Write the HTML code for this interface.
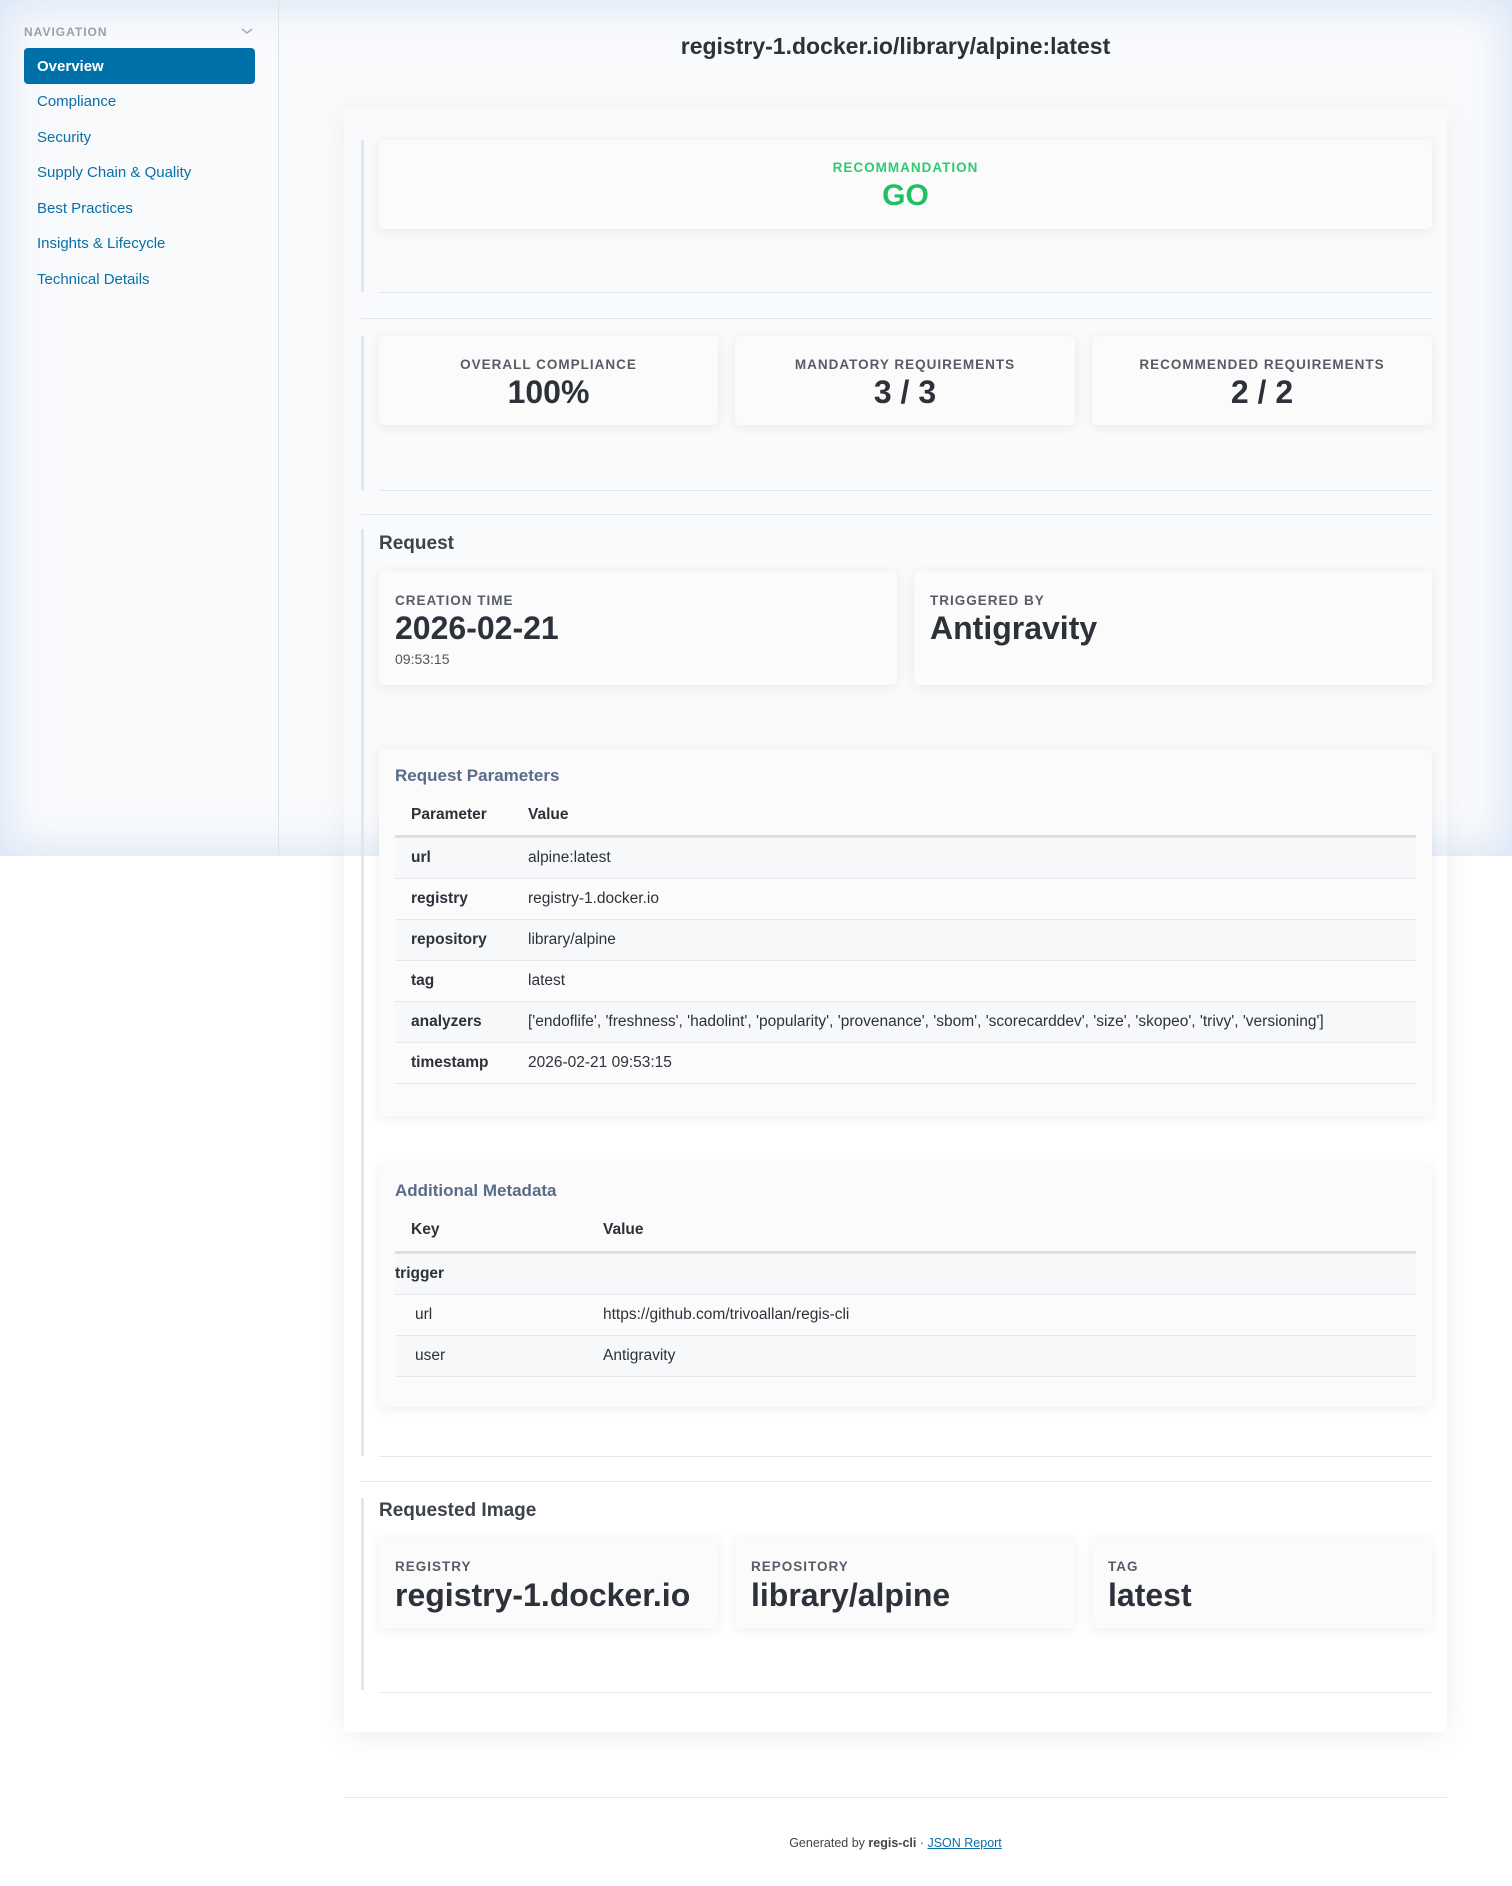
<!DOCTYPE html>
<html><head><meta charset="utf-8"><style>
*{box-sizing:border-box;margin:0;padding:0}
body{width:1512px;height:1886px;position:relative;background:#fff;font-family:"Liberation Sans",Arial,sans-serif;color:#2d3139;overflow:hidden}
.a{position:absolute;z-index:2}
.overlay{left:0;top:0;width:1512px;height:856px;background:rgba(238,241,245,0.35);box-shadow:inset 0 0 45px rgba(150,185,235,0.4);z-index:1 !important;pointer-events:none}
.side{left:0;top:0;width:279px;height:856px;border-right:1px solid #dfe3e8;z-index:6}
.navh{left:24px;top:25px;font-size:12px;font-weight:bold;letter-spacing:1px;color:#9aa0a8}
.chev{left:240px;top:26px}
.ov{left:24px;top:48px;width:231px;height:36px;background:#0070a8;border-radius:4px;color:#fff;font-weight:bold;font-size:15px;line-height:37px;padding-left:13px}
.ni{left:37px;font-size:15px;color:#0b6fa8}
.title{left:279px;width:1233px;top:33px;text-align:center;font-size:23px;font-weight:bold;color:#2d3139}
.main{left:344px;top:107px;width:1103px;height:1625px;background:#fff;border-radius:4px;box-shadow:0 4px 30px rgba(0,0,0,0.07);z-index:0 !important}
.bl{left:361px;width:3px;background:#e3e6ea}
.hr{height:1px;background:#e3e6ea}
.card{background:#fbfbfc;border-radius:5px;box-shadow:0 2px 12px rgba(0,0,0,0.07)}
.lab{font-size:13.5px;font-weight:bold;letter-spacing:1px;color:#575c66;text-transform:uppercase}
.big{font-size:32px;font-weight:bold;color:#2d3139}
.c{text-align:center}
.h2{font-size:19px;font-weight:bold;color:#3d424b}
.h3{font-size:17px;font-weight:bold;color:#5a6b8a}
.row{left:395px;width:1021px;height:41px;border-bottom:1px solid #e6e8eb;font-size:15.5px;line-height:40px}
.row b{position:absolute;left:16px}
.row span{position:absolute;left:133px}
.alt{background:#f7f8f9}
</style></head><body>
<div class="a overlay"></div>
<div class="a side">
 <div class="a navh">NAVIGATION</div>
 <svg class="a chev" width="14" height="10" viewBox="0 0 14 10"><path d="M2 3l5 4 5-4" fill="none" stroke="#a8adb4" stroke-width="1.5"/></svg>
 <div class="a ov">Overview</div>
 <div class="a ni" style="top:93px">Compliance</div>
 <div class="a ni" style="top:129px">Security</div>
 <div class="a ni" style="top:164px">Supply Chain &amp; Quality</div>
 <div class="a ni" style="top:200px">Best Practices</div>
 <div class="a ni" style="top:235px">Insights &amp; Lifecycle</div>
 <div class="a ni" style="top:271px">Technical Details</div>
</div>
<div class="a title">registry-1.docker.io/library/alpine:latest</div>
<div class="a main"></div>

<div class="a bl" style="top:140px;height:152px"></div>
<div class="a card" style="left:379px;top:140px;width:1053px;height:89px"></div>
<div class="a lab c" style="left:379px;width:1053px;top:160px;color:#2ecc71">RECOMMANDATION</div>
<div class="a c" style="left:379px;width:1053px;top:179px;font-size:30px;font-weight:bold;color:#1fbf63">GO</div>
<div class="a hr" style="left:379px;width:1053px;top:292px"></div>
<div class="a hr" style="left:361px;width:1071px;top:318px"></div>

<div class="a bl" style="top:336px;height:154px"></div>
<div class="a card" style="left:379px;top:336px;width:339px;height:89px"></div>
<div class="a card" style="left:735px;top:336px;width:340px;height:89px"></div>
<div class="a card" style="left:1092px;top:336px;width:340px;height:89px"></div>
<div class="a lab c" style="left:379px;width:339px;top:357px">Overall Compliance</div>
<div class="a lab c" style="left:735px;width:340px;top:357px">Mandatory Requirements</div>
<div class="a lab c" style="left:1092px;width:340px;top:357px">Recommended Requirements</div>
<div class="a big c" style="left:379px;width:339px;top:374px">100%</div>
<div class="a big c" style="left:735px;width:340px;top:374px">3 / 3</div>
<div class="a big c" style="left:1092px;width:340px;top:374px">2 / 2</div>
<div class="a hr" style="left:379px;width:1053px;top:490px"></div>
<div class="a hr" style="left:361px;width:1071px;top:514px"></div>

<div class="a bl" style="top:529px;height:927px"></div>
<div class="a h2" style="left:379px;top:533px">Request</div>
<div class="a card" style="left:379px;top:571px;width:518px;height:114px"></div>
<div class="a card" style="left:914px;top:571px;width:518px;height:114px"></div>
<div class="a lab" style="left:395px;top:593px">Creation Time</div>
<div class="a big" style="left:395px;top:610px">2026-02-21</div>
<div class="a" style="left:395px;top:651px;font-size:14px;color:#555">09:53:15</div>
<div class="a lab" style="left:930px;top:593px">Triggered By</div>
<div class="a big" style="left:930px;top:610px">Antigravity</div>

<div class="a card" style="left:379px;top:749px;width:1053px;height:367px"></div>
<div class="a h3" style="left:395px;top:766px">Request Parameters</div>
<div class="a" style="left:411px;top:806px;font-size:15.5px;font-weight:bold">Parameter</div>
<div class="a" style="left:528px;top:806px;font-size:15.5px;font-weight:bold">Value</div>
<div class="a" style="left:395px;top:835px;width:1021px;height:3px;background:#dde0e4"></div>
<div class="a row alt" style="top:838px"><b>url</b><span>alpine:latest</span></div>
<div class="a row" style="top:879px"><b>registry</b><span>registry-1.docker.io</span></div>
<div class="a row alt" style="top:920px"><b>repository</b><span>library/alpine</span></div>
<div class="a row" style="top:961px"><b>tag</b><span>latest</span></div>
<div class="a row alt" style="top:1002px"><b>analyzers</b><span>['endoflife', 'freshness', 'hadolint', 'popularity', 'provenance', 'sbom', 'scorecarddev', 'size', 'skopeo', 'trivy', 'versioning']</span></div>
<div class="a row" style="top:1043px"><b>timestamp</b><span>2026-02-21 09:53:15</span></div>

<div class="a card" style="left:379px;top:1164px;width:1053px;height:243px"></div>
<div class="a h3" style="left:395px;top:1181px">Additional Metadata</div>
<div class="a" style="left:411px;top:1221px;font-size:15.5px;font-weight:bold">Key</div>
<div class="a" style="left:603px;top:1221px;font-size:15.5px;font-weight:bold">Value</div>
<div class="a" style="left:395px;top:1251px;width:1021px;height:3px;background:#dde0e4"></div>
<div class="a row alt" style="top:1254px"><b style="left:0">trigger</b></div>
<div class="a row" style="top:1295px"><span style="left:20px">url</span><span style="left:208px">https://github.com/trivoallan/regis-cli</span></div>
<div class="a row alt" style="top:1336px"><span style="left:20px">user</span><span style="left:208px">Antigravity</span></div>
<div class="a hr" style="left:379px;width:1053px;top:1456px"></div>
<div class="a hr" style="left:361px;width:1071px;top:1481px"></div>

<div class="a bl" style="top:1498px;height:192px"></div>
<div class="a h2" style="left:379px;top:1500px">Requested Image</div>
<div class="a card" style="left:379px;top:1537px;width:339px;height:91px"></div>
<div class="a card" style="left:735px;top:1537px;width:340px;height:91px"></div>
<div class="a card" style="left:1092px;top:1537px;width:340px;height:91px"></div>
<div class="a lab" style="left:395px;top:1559px">Registry</div>
<div class="a lab" style="left:751px;top:1559px">Repository</div>
<div class="a lab" style="left:1108px;top:1559px">Tag</div>
<div class="a big" style="left:395px;top:1577px">registry-1.docker.io</div>
<div class="a big" style="left:751px;top:1577px">library/alpine</div>
<div class="a big" style="left:1108px;top:1577px">latest</div>
<div class="a hr" style="left:379px;width:1053px;top:1692px"></div>

<div class="a hr" style="left:344px;width:1103px;top:1797px"></div>
<div class="a c" style="left:344px;width:1103px;top:1836px;font-size:12.5px;color:#444">Generated by <b>regis-cli</b> · <span style="color:#0b6fa8;text-decoration:underline">JSON Report</span></div>
</body></html>
